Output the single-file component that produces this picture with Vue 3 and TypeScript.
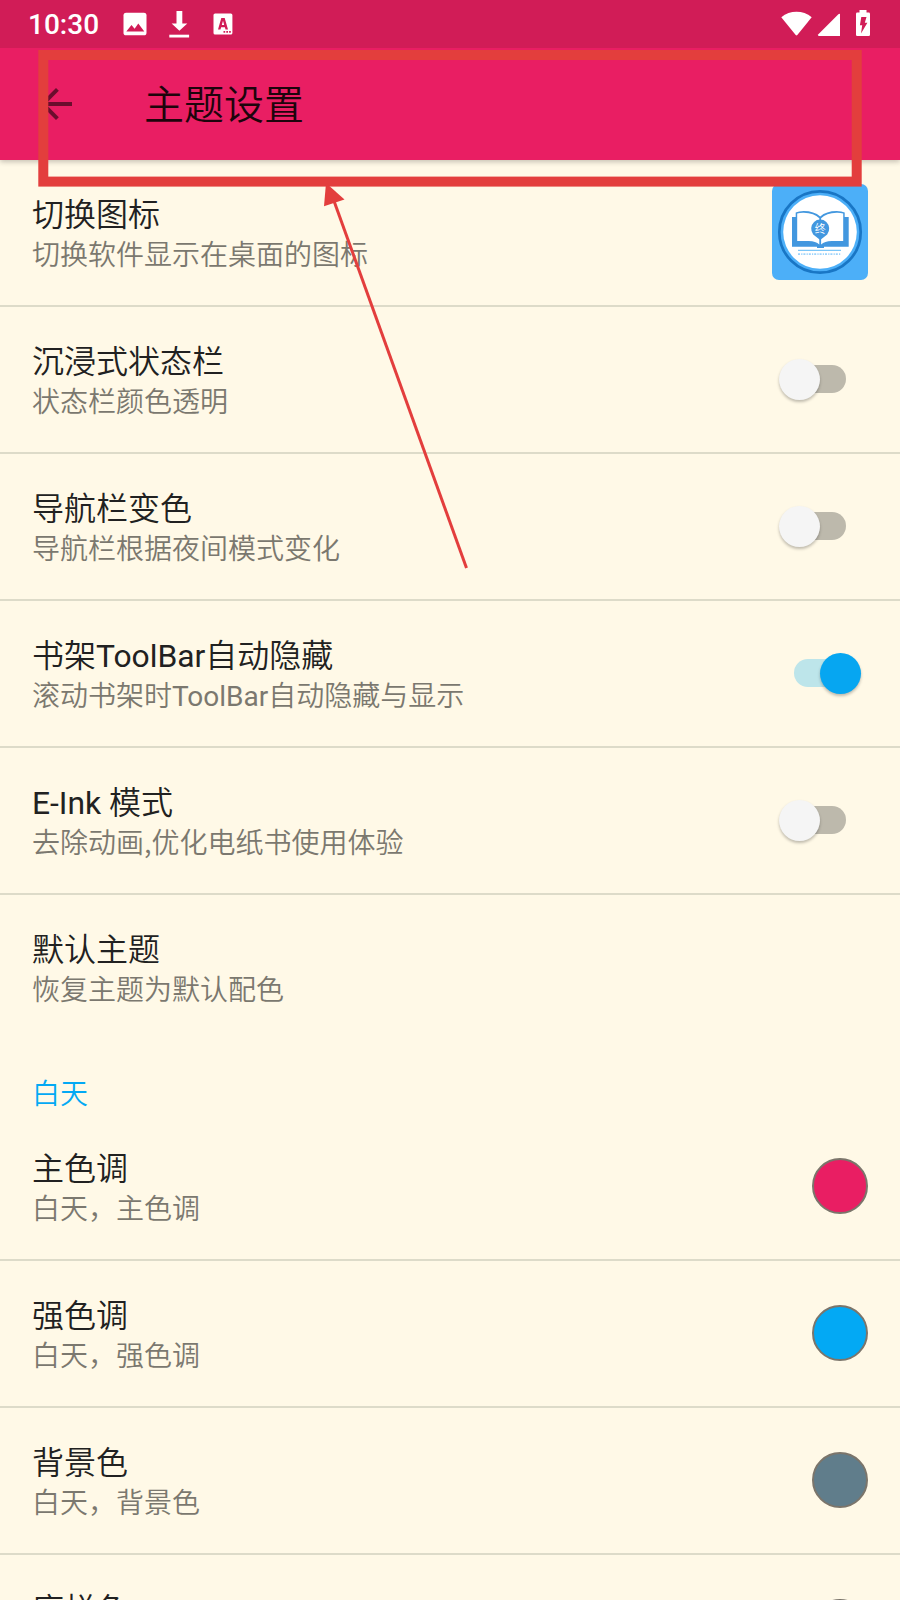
<script setup lang="ts">
interface Pref {
  title: string
  summary: string
  kind: 'icon' | 'switch' | 'plain' | 'color'
  on?: boolean
  color?: string
}

interface Run {
  text: string
  latin: boolean
}

const general: Pref[] = [
  { title: '切换图标', summary: '切换软件显示在桌面的图标', kind: 'icon' },
  { title: '沉浸式状态栏', summary: '状态栏颜色透明', kind: 'switch', on: false },
  { title: '导航栏变色', summary: '导航栏根据夜间模式变化', kind: 'switch', on: false },
  { title: '书架ToolBar自动隐藏', summary: '滚动书架时ToolBar自动隐藏与显示', kind: 'switch', on: true },
  { title: 'E-Ink 模式', summary: '去除动画,优化电纸书使用体验', kind: 'switch', on: false },
  { title: '默认主题', summary: '恢复主题为默认配色', kind: 'plain' },
]

const day: Pref[] = [
  { title: '主色调', summary: '白天，主色调', kind: 'color', color: '#e91e63' },
  { title: '强色调', summary: '白天，强色调', kind: 'color', color: '#03a9f4' },
  { title: '背景色', summary: '白天，背景色', kind: 'color', color: '#607d8b' },
  { title: '底栏色', summary: '白天，底栏色', kind: 'color', color: '#fff9e7' },
]

const groups = [
  { name: '', items: general },
  { name: '白天', items: day },
]

// Splits a label so that Latin words can use a heavier face than the Han text.
const runs = (text: string): Run[] =>
  text
    .split(/([A-Za-z][A-Za-z -]*)/)
    .filter((part) => part.length > 0)
    .map((part) => ({ text: part, latin: /^[A-Za-z]/.test(part) }))
</script>

<template>
  <div class="screen">
    <header class="status">
      <span class="time">10:30</span>
      <svg class="notifications" width="120" height="48" viewBox="120 0 120 48">
        <rect x="123.5" y="12.7" width="23" height="22.6" rx="2.6" fill="#fff" />
        <path d="M126.300 31.500L131.500 25L134.600 28.800L138.300 23.600L144.300 31.500Z" fill="#d11c57" />
        <path d="M176.500 11h5.800v12.500h5L179.400 30.800L171.600 23.500h4.900Z" fill="#fff" />
        <rect x="169.300" y="34.700" width="19.800" height="2.800" fill="#fff" />
        <rect x="213.500" y="13.500" width="18.900" height="21" rx="1.600" fill="#fff" />
        <path fill-rule="evenodd" d="M221.300 18h3.400L228 29.500h-2.500l-.6-2.300h-3.800l-.6 2.300H218ZM223 20.800l-1.200 4.300h2.400Z" fill="#d11c57" />
        <path d="M223.500 31h1.700v1.700h-1.700zM226.300 31h1.700v1.700h-1.700zM229.100 31h1.700v1.700h-1.700z" fill="#d11c57" />
      </svg>
      <svg class="system" width="100" height="48" viewBox="775 0 100 48">
        <path d="M781.300 17.300C790 10 803 10 811.700 17.300L797.300 35Q796.500 35.800 795.700 35Z" fill="#fff" />
        <path d="M840 14V36H819Q817.200 35.700 818.400 34.200L838.400 14.300Q839.500 13.500 840 14Z" fill="#fff" />
        <path d="M859.500 10h7v2.600h2.200q1.300 0 1.300 1.300V34.700q0 1.300-1.300 1.300H857.300q-1.300 0-1.300-1.300V13.900q0-1.300 1.300-1.300h2.200Z" fill="#fff" />
        <path d="M861.300 17h5.200l-1.700 5.800h2.600L861 33.500l1.200-8.300h-2.300Z" fill="#d11c57" />
      </svg>
    </header>

    <div class="toolbar">
      <svg class="back" width="48" height="48" viewBox="0 0 24 24">
        <path d="M20 11H7.830l5.590-5.590L12 4l-8 8 8 8 1.410-1.410L7.830 13H20v-2z" fill="#000" fill-opacity=".54" />
      </svg>
      <h1>主题设置</h1>
    </div>

    <main>
      <section v-for="group in groups" :key="group.name">
        <h2 v-if="group.name">{{ group.name }}</h2>
        <div v-for="item in group.items" :key="item.title" class="row">
          <div class="texts">
            <div class="title"><span v-for="(run, i) in runs(item.title)" :key="i" :class="{ latin: run.latin }">{{ run.text }}</span></div>
            <div class="summary"><span v-for="(run, i) in runs(item.summary)" :key="i" :class="{ latin: run.latin }">{{ run.text }}</span></div>
          </div>

          <svg v-if="item.kind === 'icon'" width="96" height="96" viewBox="0 0 96 96">
            <rect width="96" height="96" rx="7" fill="#4caff8" />
            <circle cx="48" cy="48" r="40.700" fill="#4caff8" stroke="#1976c5" stroke-width="2.700" />
            <circle cx="48" cy="48" r="36.800" fill="#fff" />
            <path d="M20 33h3.700v-4.500q3-1.500 8-1.500q10.500 0 16.500 5.500q6-5.500 16.500-5.500q5 0 8 1.500V33h4v29.700H52v1.300h-7v-1.300H20Z" fill="#4297df" />
            <path d="M25.200 29.500q3-.9 6.500-.8q10.500.3 15.600 5.500V60.500q-3.500-3.200-10.500-3.500h-11.600Z" fill="#fff" />
            <path d="M71.200 29.500q-3-.9-6.500-.8q-10.500.3-15.600 5.500V60.500q3.500-3.200 10.500-3.500h11.600Z" fill="#fff" />
            <path d="M48.200 56L41.200 50.500A9 9.200 0 1 1 55.200 50.500Z" fill="#4297df" />
            <text x="48.200" y="48.500" class="seal">终</text>
            <path d="M26 66.300h43" stroke="#5cb8f6" stroke-width="1" />
            <path d="M26 70.200h43" stroke="#4caff8" stroke-width="1.800" stroke-opacity=".55" stroke-dasharray="2 1.200 1.200 1" />
          </svg>
          <div v-else-if="item.kind === 'switch'" class="switch" :class="{ on: item.on }">
            <span class="track"></span>
            <span class="thumb"></span>
          </div>
          <span v-else-if="item.kind === 'color'" class="swatch" :style="{ backgroundColor: item.color }"></span>
        </div>
      </section>
    </main>

    <svg class="annotation" width="900" height="1600" viewBox="0 0 900 1600">
      <rect x="43.300" y="55" width="813.400" height="126.600" fill="none" stroke="#e33e3d" stroke-width="10" />
      <path d="M334 201L466.500 568" stroke="#e33e3d" stroke-width="3" />
      <path d="M326 183L344.500 199.500L324 206.200Z" fill="#e33e3d" />
    </svg>
  </div>
</template>

<style>
body {
  margin: 0;
}
</style>

<style scoped>
.screen {
  position: relative;
  width: 900px;
  height: 1600px;
  overflow: hidden;
  background: #fff9e7;
  font-family: "Noto Sans CJK SC", sans-serif;
  font-weight: 350;
  color: #212121;
}
.status {
  position: relative;
  z-index: 1;
  display: flex;
  align-items: center;
  height: 48px;
  padding-right: 25px;
  padding-left: 28px;
  background: #d11c57;
}
.time {
  width: 92px;
  color: #fff;
  font-family: Roboto, sans-serif;
  font-size: 28px;
  font-weight: 500;
  line-height: 51px;
}
.system {
  margin-left: auto;
}
.toolbar {
  position: relative;
  display: flex;
  align-items: center;
  height: 112px;
  padding-left: 32px;
  background: #e91e63;
  box-shadow: 0 2px 5px rgba(0, 0, 0, 0.22);
}
h1 {
  margin: -4px 0 0 64px;
  color: #1d040c;
  font-size: 40px;
  font-weight: 350;
  line-height: 56px;
}
h2 {
  height: 72px;
  margin: 0;
  padding-left: 32px;
  color: #03a9f4;
  font-size: 28px;
  font-weight: 350;
  line-height: 100px;
}
.row {
  box-sizing: border-box;
  display: flex;
  align-items: center;
  justify-content: space-between;
  height: 147px;
  padding: 0 32px 1px;
  border-bottom: 2px solid #dddbc9;
}
section:first-child .row:last-child {
  border-bottom-color: transparent;
}
.texts {
  padding-top: 4px;
  white-space: nowrap;
}
.title {
  height: 42px;
  font-size: 32px;
  line-height: 37px;
}
.summary {
  height: 38px;
  color: #7b786f;
  font-size: 28px;
  line-height: 34px;
}
.latin {
  font-family: Roboto, sans-serif;
  font-weight: 400;
  line-height: 0;
  white-space: pre;
}
.title .latin {
  font-size: 31.8px;
}
.swatch {
  box-sizing: border-box;
  width: 56px;
  height: 56px;
  border: 2px solid #7b756b;
  border-radius: 50%;
}
.switch {
  display: grid;
  align-items: center;
  width: 82px;
  height: 42px;
  margin-right: 7px;
}
.track,
.thumb {
  grid-area: 1 / 1;
}
.track {
  width: 60px;
  height: 28px;
  margin-left: 7px;
  border-radius: 14px;
  background: #bdb9ac;
}
.thumb {
  width: 41px;
  height: 41px;
  border-radius: 50%;
  background: #f5f5f5;
  box-shadow: 0 2px 3px rgba(0, 0, 0, 0.25);
}
.on .track {
  margin-left: 15px;
  background: #bde5ea;
}
.on .thumb {
  justify-self: end;
  background: #06a6f1;
}
.seal {
  fill: #fff;
  font-size: 11px;
  text-anchor: middle;
}
.annotation {
  position: absolute;
  top: 0;
  left: 0;
  pointer-events: none;
}
</style>
